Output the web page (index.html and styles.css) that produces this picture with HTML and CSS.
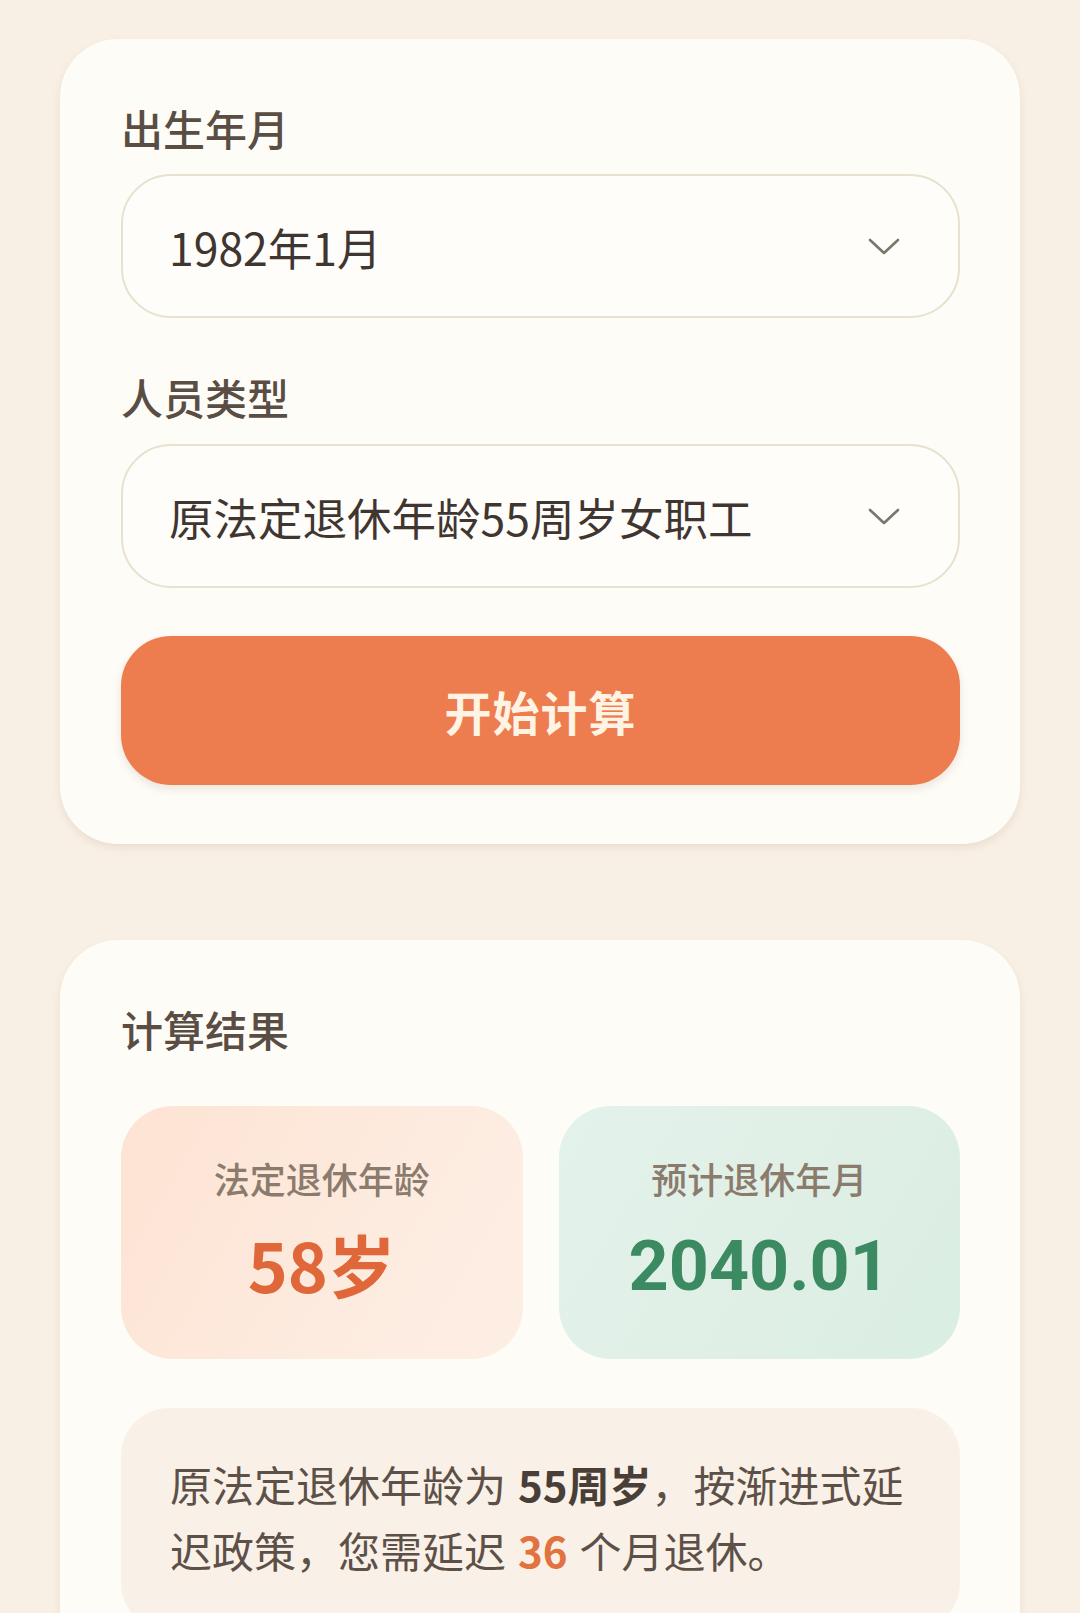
FILE: index.html
```html
<!DOCTYPE html>
<html lang="zh-CN">
<head>
<meta charset="utf-8">
<title>退休年龄计算</title>
<link rel="stylesheet" href="styles.css">
</head>
<body>
<main class="page">
  <section class="card form-card">
    <div class="field-label">出生年月</div>
    <div class="select">
      <span class="select-text">1982年1月</span>
      <svg class="chevron" width="32" height="18" viewBox="0 0 32 18"><path d="M2 2 L16 15 L30 2" fill="none" stroke="#7b766b" stroke-width="2.6" stroke-linecap="round" stroke-linejoin="round"/></svg>
    </div>
    <div class="field-label second">人员类型</div>
    <div class="select">
      <span class="select-text">原法定退休年龄55周岁女职工</span>
      <svg class="chevron" width="32" height="18" viewBox="0 0 32 18"><path d="M2 2 L16 15 L30 2" fill="none" stroke="#7b766b" stroke-width="2.6" stroke-linecap="round" stroke-linejoin="round"/></svg>
    </div>
    <button class="calc-btn">开始计算</button>
  </section>

  <section class="card result-card">
    <div class="result-title">计算结果</div>
    <div class="result-grid">
      <div class="result-box age">
        <div class="result-label">法定退休年龄</div>
        <div class="result-value">58岁</div>
      </div>
      <div class="result-box date">
        <div class="result-label">预计退休年月</div>
        <div class="result-value">2040.01</div>
      </div>
    </div>
    <div class="info-box">
      <p class="info-text"><span>原法定退休年龄为</span><strong class="em-dark">55周岁</strong><span>，按渐进式延</span><br><span>迟政策，您需延迟</span><strong class="em-orange">36</strong><span>个月退休。</span></p>
    </div>
  </section>
</main>
</body>
</html>
```

FILE: styles.css
```css
* {
  box-sizing: border-box;
}

html, body {
  margin: 0;
  padding: 0;
}

body {
  background: #f9f0e5;
  font-family: "Noto Sans CJK SC", "Noto Sans", sans-serif;
  color: #4a3f37;
  overflow: hidden;
}

.page {
  padding: 39px 60px 0;
  display: flex;
  flex-direction: column;
  gap: 96px;
}

.card {
  background: #fefcf7;
  border-radius: 58px;
  box-shadow: 0 4px 8px rgba(140, 115, 85, 0.14);
}

.form-card {
  padding: 60px 60px 59px 61px;
  display: flex;
  flex-direction: column;
}

.field-label {
  font-size: 42px;
  line-height: 58px;
  font-weight: 500;
  color: #5a4d43;
  margin-bottom: 17px;
}

.field-label.second {
  margin-top: 50px;
  margin-bottom: 18px;
}

.select {
  height: 144px;
  border: 2.5px solid #e8e1cd;
  border-radius: 50px;
  background: #fffdf9;
  display: flex;
  align-items: center;
  justify-content: space-between;
  padding: 0 58px 0 46px;
}

.select-text {
  font-size: 44.5px;
  color: #3f3631;
}

.chevron {
  flex: none;
  margin-top: 2px;
}

.calc-btn {
  margin-top: 48px;
  height: 149px;
  border: none;
  border-radius: 50px;
  background: #ed7c4f;
  color: #fff3e3;
  font-family: "Noto Sans CJK SC", "Noto Sans", sans-serif;
  font-size: 47px;
  font-weight: 700;
  letter-spacing: 1px;
  box-shadow: 0 4px 8px rgba(120, 90, 60, 0.14);
}

.result-card {
  padding: 60px 60px 60px 61px;
}

.result-title {
  font-size: 42px;
  line-height: 58px;
  font-weight: 500;
  color: #5a4d43;
}

.result-grid {
  margin-top: 48px;
  display: grid;
  grid-template-columns: 1fr 1fr;
  gap: 36px;
}

.result-box {
  height: 253px;
  border-radius: 52px;
  display: flex;
  flex-direction: column;
  align-items: center;
  padding-top: 47px;
}

.result-box.age {
  background: linear-gradient(120deg, #fde3d3 0%, #fdebdf 60%, #fdeee4 100%);
}

.result-box.date {
  background: linear-gradient(120deg, #e3f2ea 0%, #dfefe6 60%, #daeee2 100%);
}

.result-label {
  font-size: 36px;
  line-height: 50px;
  color: #8b7b6d;
  font-weight: 500;
}

.result-value {
  margin-top: 20px;
  font-size: 68px;
  line-height: 82px;
  font-weight: 700;
}

.age .result-value {
  color: #e0673a;
}

.date .result-value {
  color: #3b8a62;
  font-family: "Roboto", "Noto Sans CJK SC", sans-serif;
  font-size: 70px;
  margin-top: 22px;
}

.info-box {
  margin-top: 49px;
  background: #f9f1e7;
  border-radius: 48px;
  padding: 43px 46px 48px 49px;
}

.info-text {
  margin: 0;
  font-size: 42px;
  line-height: 66px;
  color: #5d5048;
  white-space: nowrap;
}

.em-dark,
.em-orange {
  font-weight: 700;
  margin-left: 12px;
}

.em-dark {
  color: #4a3f38;
}

.em-orange {
  color: #e27240;
  margin-right: 12px;
}
```
